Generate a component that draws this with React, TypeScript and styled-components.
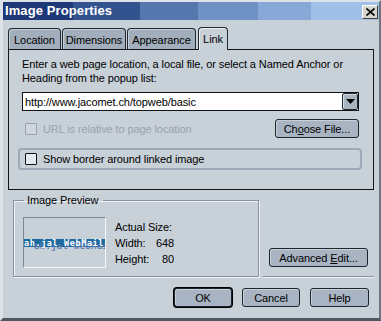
import styled, { createGlobalStyle } from "styled-components";

const GlobalStyle = createGlobalStyle`
  html, body {
    margin: 0;
    padding: 0;
    background: #c8d0d8;
  }
  body {
    font-family: "Liberation Sans", Arial, sans-serif;
    font-size: 11px;
    letter-spacing: -0.1px;
    color: #000000;
  }
`;

const Window = styled.div`
  width: 381px;
  height: 321px;
  box-sizing: border-box;
  background: #c8d0d8;
  border-style: solid;
  border-width: 2px 2px 3px 3px;
  border-color: #dde2e8 #6c747c #505860 #dde2e8;
  display: flex;
  flex-direction: column;
`;

const TitleBar = styled.div`
  height: 18px;
  display: flex;
  align-items: flex-start;
  justify-content: space-between;
  padding-left: 2px;
  background: linear-gradient(
    to right,
    #1f3877 0 70px,
    #33538f 70px 137px,
    #5676ae 137px 195px,
    #7091c4 195px 255px,
    #88a8d8 255px 308px,
    #a0c0e8 308px
  );
`;

const Title = styled.span`
  font-size: 13px;
  font-weight: bold;
  color: #ffffff;
  line-height: 18px;
  letter-spacing: 0.1px;
`;

const CloseButton = styled.div`
  width: 16px;
  height: 14px;
  margin: 3px 1px 0 0;
  box-sizing: border-box;
  background: #d6d6ce;
  border-style: solid;
  border-width: 1px;
  border-color: #ffffff #404040 #404040 #ffffff;
  display: flex;
  align-items: center;
  justify-content: center;
`;

const Body = styled.div`
  flex: 1;
  display: flex;
  flex-direction: column;
  padding: 7px 5px 0 5px;
`;

const TabRow = styled.div`
  display: flex;
  align-items: flex-end;
  gap: 1px;
  height: 22px;
  position: relative;
  z-index: 1;
`;

const Tab = styled.div<{ $active?: boolean; $width: number }>`
  box-sizing: border-box;
  width: ${(p) => p.$width}px;
  height: ${(p) => (p.$active ? "23px" : "21px")};
  margin-bottom: ${(p) => (p.$active ? "-1px" : "0")};
  margin-left: ${(p) => (p.$active ? "1px" : "0")};
  border: 1px solid #202830;
  border-bottom: none;
  border-radius: 4px 4px 0 0;
  background: ${(p) => (p.$active ? "#c8d0d8" : "#a2aebb")};
  box-shadow: inset 1px 1px ${(p) => (p.$active ? "#eef2f6" : "#c4ccd6")};
  display: flex;
  align-items: center;
  justify-content: center;
  line-height: 14px;
  padding-top: ${(p) => (p.$active ? "0" : "1px")};
`;

const Panel = styled.div`
  box-sizing: border-box;
  height: 141px;
  border: 1px solid #101418;
  padding: 7px 11px 0 9px;
  display: flex;
  flex-direction: column;
`;

const Description = styled.p`
  margin: 0 0 7px 4px;
  line-height: 14px;
  letter-spacing: -0.1px;
`;

const UrlField = styled.div`
  box-sizing: border-box;
  height: 19px;
  width: 337px;
  margin-left: 4px;
  background: #ffffff;
  border: 1px solid #101418;
  display: flex;
  align-items: center;
  justify-content: space-between;
  padding-left: 2px;
`;

const DropButton = styled.div`
  box-sizing: border-box;
  width: 16px;
  height: 17px;
  background: #a8b4c0;
  border: 1px solid #202830;
  border-radius: 2px;
  box-shadow: inset 1px 1px #d4dce4;
  display: flex;
  align-items: center;
  justify-content: center;
`;

const OptionRow = styled.div`
  display: flex;
  align-items: center;
  justify-content: space-between;
  margin: 8px 3px 0 7px;
`;

const CheckLabel = styled.label<{ $disabled?: boolean }>`
  display: flex;
  align-items: center;
  gap: 6px;
  color: ${(p) => (p.$disabled ? "#97a3b0" : "#000000")};
`;

const CheckBox = styled.span<{ $disabled?: boolean }>`
  box-sizing: border-box;
  width: 12px;
  height: 12px;
  border: 1px solid ${(p) => (p.$disabled ? "#97a3b0" : "#101418")};
  border-radius: 1px;
  background: ${(p) => (p.$disabled ? "#d0d8de" : "#e2ecf0")};
`;

const BorderOption = styled.div`
  box-sizing: border-box;
  height: 22px;
  margin-top: 10px;
  border: 2px solid #9ea9b7;
  border-radius: 4px;
  display: flex;
  align-items: center;
  padding-left: 5px;
`;

const Button = styled.div<{ $width?: number; $default?: boolean }>`
  box-sizing: border-box;
  width: ${(p) => p.$width ?? 58}px;
  height: 19px;
  background: #a8b4c2;
  border: 1px solid #1c242c;
  border-radius: 3px;
  box-shadow: inset 1px 1px #c8d0da
    ${(p) => (p.$default ? ", 0 0 0 1px #000000" : "")};
  display: flex;
  align-items: center;
  justify-content: center;
  line-height: 14px;
`;

const BottomArea = styled.div`
  display: flex;
  gap: 4px;
  margin: 3px 0 0 5px;
`;

const GroupBox = styled.fieldset`
  box-sizing: border-box;
  width: 246px;
  margin: 0;
  padding: 0 0 8px 9px;
  border: 1px solid #8894a0;
  box-shadow: inset 1px 1px #eef2f6, 1px 1px #eef2f6;
  display: flex;
  gap: 9px;
`;

const GroupLegend = styled.legend`
  margin-left: 1px;
  padding: 0 5px 0 3px;
  line-height: 14px;
`;

const Preview = styled.div`
  box-sizing: border-box;
  width: 83px;
  height: 51px;
  margin-top: 10px;
  border-style: solid;
  border-width: 1px;
  border-color: #7c8894 #f4f6f8 #f4f6f8 #7c8894;
  background: #c8d0d8;
  overflow: hidden;
  display: flex;
  flex-direction: column;
  padding-top: 21px;
`;

const Banner = styled.div`
  height: 8px;
  background: #1d6aa0;
  color: #ffffff;
  font-family: "DejaVu Sans Mono", monospace;
  font-size: 8.5px;
  font-weight: bold;
  line-height: 8px;
  white-space: nowrap;
  letter-spacing: 0.6px;
  text-shadow: 10px 3px #5a7fb0;
`;

const Info = styled.div`
  margin-top: 12px;
  display: flex;
  flex-direction: column;
  line-height: 16px;
`;

const InfoRow = styled.div`
  display: flex;
  justify-content: space-between;
  width: 59px;
`;

const SideColumn = styled.div`
  flex: 1;
  display: flex;
  flex-direction: column;
  justify-content: flex-end;
  padding: 0 0 9px 6px;
  border-bottom: 1px solid #8894a0;
  box-shadow: 0 1px #eef2f6;
`;

const ButtonRow = styled.div`
  display: flex;
  justify-content: flex-end;
  gap: 10px;
  margin: 11px 5px 0 0;
`;

const Hotkey = styled.span`
  text-decoration: underline;
`;

const App = () => {
  return (
    <>
      <GlobalStyle />
      <Window>
        <TitleBar>
          <Title>Image Properties</Title>
          <CloseButton>
            <svg width="9" height="8" viewBox="0 0 9 8">
              <path d="M0.5 0.5 L8.5 7.5 M8.5 0.5 L0.5 7.5" stroke="#000" strokeWidth="1.6" />
            </svg>
          </CloseButton>
        </TitleBar>
        <Body>
          <TabRow>
            <Tab $width={53}>Location</Tab>
            <Tab $width={64}>Dimensions</Tab>
            <Tab $width={69}>Appearance</Tab>
            <Tab $width={30} $active>
              Link
            </Tab>
          </TabRow>
          <Panel>
            <Description>
              Enter a web page location, a local file, or select a Named Anchor or
              <br />
              Heading from the popup list:
            </Description>
            <UrlField>
              <span>http://www.jacomet.ch/topweb/basic</span>
              <DropButton>
                <svg width="9" height="5" viewBox="0 0 9 5">
                  <path d="M0 0 H9 L4.5 5 Z" fill="#000" />
                </svg>
              </DropButton>
            </UrlField>
            <OptionRow>
              <CheckLabel $disabled>
                <CheckBox $disabled />
                URL is relative to page location
              </CheckLabel>
              <Button $width={84}>
                <span>
                  Ch<Hotkey>o</Hotkey>ose File...
                </span>
              </Button>
            </OptionRow>
            <BorderOption>
              <CheckLabel>
                <CheckBox />
                Show border around linked image
              </CheckLabel>
            </BorderOption>
          </Panel>
          <BottomArea>
            <GroupBox>
              <GroupLegend>Image Preview</GroupLegend>
              <Preview>
                <Banner>ah.jal WebMail</Banner>
              </Preview>
              <Info>
                <span>Actual Size:</span>
                <InfoRow>
                  <span>Width:</span>
                  <span>648</span>
                </InfoRow>
                <InfoRow>
                  <span>Height:</span>
                  <span>80</span>
                </InfoRow>
              </Info>
            </GroupBox>
            <SideColumn>
              <Button $width={99}>
                <span>
                  Advanced <Hotkey>E</Hotkey>dit...
                </span>
              </Button>
            </SideColumn>
          </BottomArea>
          <ButtonRow>
            <Button $default>OK</Button>
            <Button>Cancel</Button>
            <Button $width={59}>Help</Button>
          </ButtonRow>
        </Body>
      </Window>
    </>
  );
};

export default App;
